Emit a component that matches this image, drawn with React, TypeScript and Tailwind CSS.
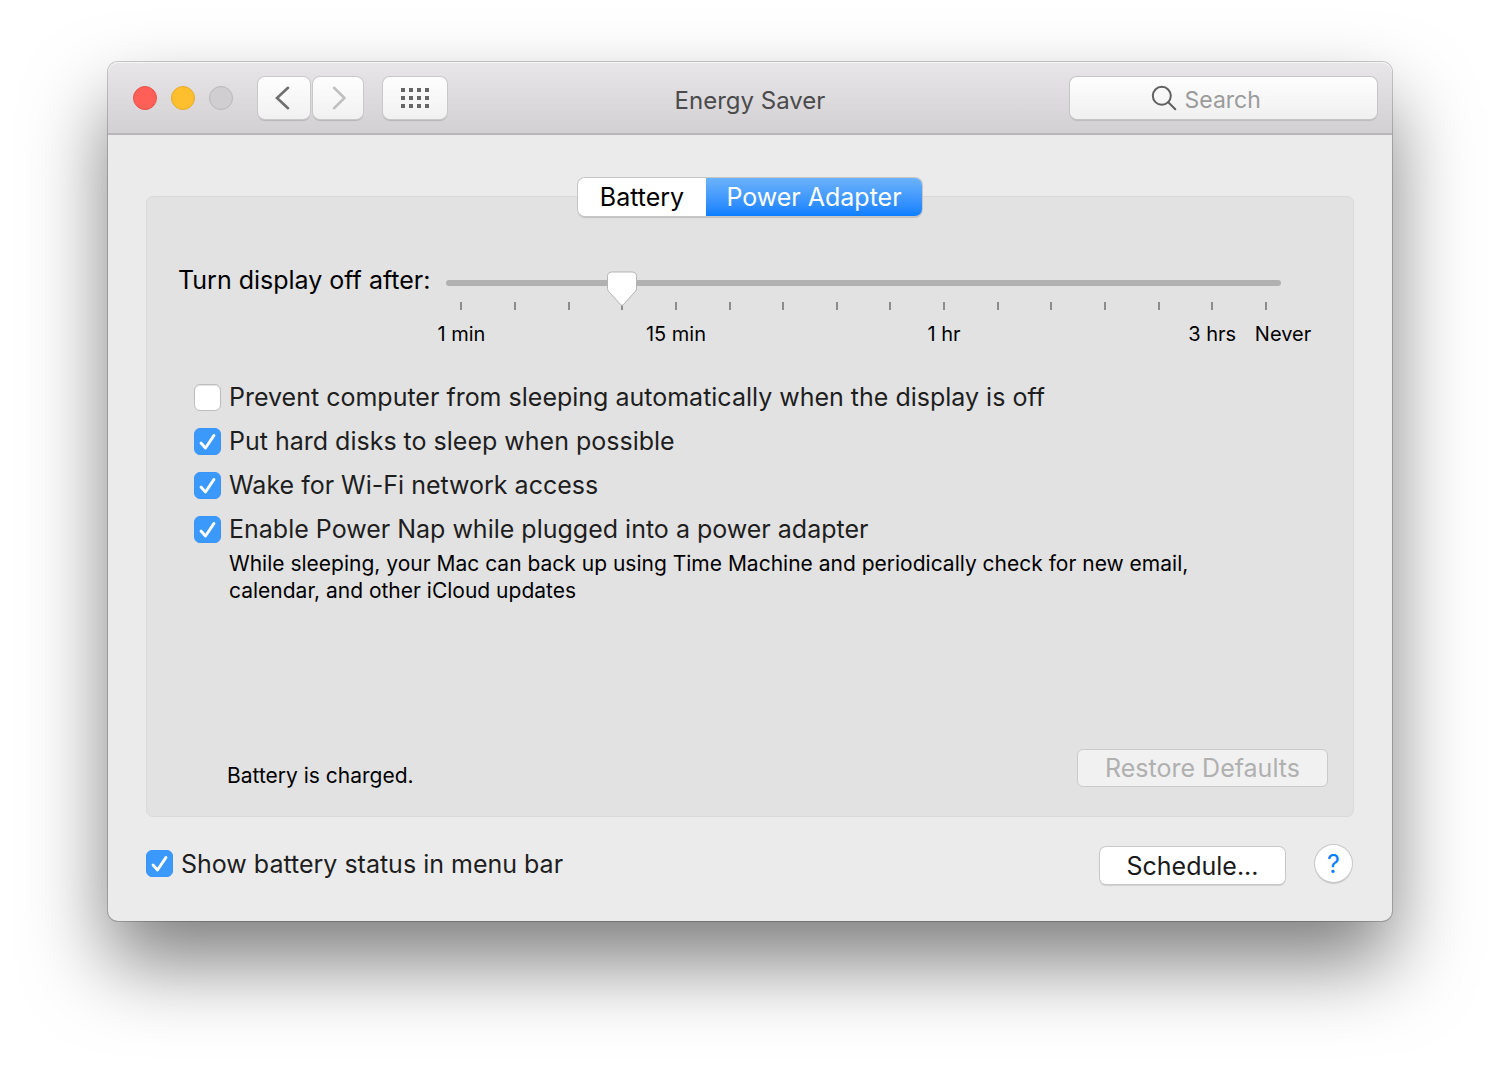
import { useState } from "react";

const LABELS: Record<number, string> = { 0: "1 min", 4: "15 min", 9: "1 hr", 14: "3 hrs", 15: "Never" };
const TICKS = Array.from({ length: 16 }, (_, i) => i);

function Check({ label, checked = false }: { label: string; checked?: boolean }) {
  return (
    <label className="flex w-fit items-center gap-2 text-[25px] leading-8 text-[#1e1e1e]">
      <span className="grid size-[27px] shrink-0">
        <input
          type="checkbox"
          defaultChecked={checked}
          className="peer col-start-1 row-start-1 size-[27px] appearance-none rounded-[6px] border border-[#bdbdbd] bg-white shadow-[inset_0_1px_1px_rgba(0,0,0,0.12)] checked:border-[#3b95f8] checked:bg-[#3b99fc] checked:shadow-none"
        />
        <svg
          viewBox="0 0 27 27"
          className="pointer-events-none col-start-1 row-start-1 size-[27px] opacity-0 peer-checked:opacity-100"
          fill="none"
          stroke="white"
          strokeWidth="2.8"
          strokeLinecap="round"
          strokeLinejoin="round"
          aria-hidden="true"
        >
          <path d="M7 15 11.500 20 20 7.400" />
        </svg>
      </span>
      {label}
    </label>
  );
}

function DisplaySlider() {
  const [value, setValue] = useState(3);
  return (
    <div className="flex items-start">
      <label htmlFor="display-off" className="shrink-0 text-[25px] leading-8 text-black">
        Turn display off after:
      </label>
      <div className="mt-[7px] mr-[47px] ml-4 min-w-0 flex-1">
        <div className="relative flex h-[35px] items-start">
          <input
            id="display-off"
            type="range"
            min={0}
            max={15}
            value={value}
            onChange={(e) => setValue(Number(e.target.value))}
            className="mt-[9px] h-1.5 w-full appearance-none rounded-full bg-[#b1b1b1] [&::-webkit-slider-thumb]:h-8 [&::-webkit-slider-thumb]:w-[30px] [&::-webkit-slider-thumb]:appearance-none [&::-webkit-slider-thumb]:opacity-0"
          />
          <div className="pointer-events-none absolute inset-x-[15px] top-0 h-[35px]">
            <svg
              viewBox="0 0 32 36"
              className="absolute h-9 w-8 -translate-x-1/2"
              style={{ left: `${(value / 15) * 100}%` }}
              aria-hidden="true"
            >
              <path
                d="M6 1H26Q30.500 1 30.500 5.500V17.500Q30.500 19 29.500 20.200L17.200 33.800Q16 35 14.800 33.800L2.500 20.200Q1.500 19 1.500 17.500V5.500Q1.500 1 6 1Z"
                fill="white"
                stroke="#b4b4b4"
                strokeWidth="1"
              />
            </svg>
          </div>
        </div>
        <div className="-mt-1 flex justify-between px-3.5">
          {TICKS.map((i) => (
            <div key={i} className={`flex w-0.5 flex-col gap-2.5 ${i === 15 ? "items-start" : "items-center"}`}>
              <span className="h-2 w-0.5 shrink-0 bg-[#8c8c8c]" />
              <span className={`text-[20px] leading-7 whitespace-nowrap text-black ${i === 15 ? "-ml-2.5" : ""}`}>
                {LABELS[i] ?? ""}
              </span>
            </div>
          ))}
        </div>
      </div>
    </div>
  );
}

const toolButton =
  "flex h-[42px] items-center justify-center rounded-[7px] bg-linear-to-b from-[#fefefe] to-[#f1f1f1] shadow-[0_0_0_1px_#c9c8c9,0_2px_1px_rgba(0,0,0,0.15)]";

export default function App() {
  return (
    <main className="min-h-screen bg-white px-[108px] pt-[62px] pb-[154px] font-['Inter',sans-serif]">
      <section className="rounded-[10px] bg-[#ebebeb] shadow-[0_0_0_1px_rgba(0,0,0,0.2),0_42px_80px_rgba(0,0,0,0.5)]">
        <header className="grid h-[73px] grid-cols-[1fr_auto_1fr] items-center rounded-t-[10px] border-b-2 border-[#b8b6b8] bg-linear-to-b from-[#e8e6e8] to-[#d2d0d2] px-[15px] shadow-[inset_0_1px_0_#f6f5f6]">
          <div className="flex items-center pl-2.5">
            <div className="mr-[25px] flex gap-[14px]">
              <button aria-label="Close" className="size-6 rounded-full border border-[#e9534b] bg-[#ff5f57]" />
              <button aria-label="Minimize" className="size-6 rounded-full border border-[#e6ac2d] bg-[#fdbf2d]" />
              <button aria-label="Zoom" disabled className="size-6 rounded-full border border-[#b9b7b9] bg-[#d0ced0]" />
            </div>
            <button aria-label="Back" className={`${toolButton} w-[52px]`}>
              <svg viewBox="0 0 18 24" className="h-6 w-[18px]" fill="none" stroke="#6f6f6f" strokeWidth="2.6" strokeLinecap="round" aria-hidden="true">
                <path d="M13 1.800 2 12 13 22.200" />
              </svg>
            </button>
            <button aria-label="Forward" disabled className={`${toolButton} ml-[3px] w-[50px]`}>
              <svg viewBox="0 0 16 24" className="h-6 w-4" fill="none" stroke="#c0c0c0" strokeWidth="2.6" strokeLinecap="round" aria-hidden="true">
                <path d="M4 1.800 14.500 12 4 22.200" />
              </svg>
            </button>
            <button aria-label="Show all preferences" className={`${toolButton} ml-5 w-16`}>
              <svg viewBox="0 0 28 20" className="h-5 w-7" fill="#666" aria-hidden="true">
                {[0, 8, 16, 24].map((x) => [0, 8, 16].map((y) => <rect key={`${x}-${y}`} x={x} y={y} width="4" height="4" />))}
              </svg>
            </button>
          </div>
          <h1 className="pt-1.5 text-[24px] leading-8 font-normal text-[#4b4b4b]">Energy Saver</h1>
          <label className="flex h-[42px] w-[307px] items-center justify-center gap-2 justify-self-end rounded-[7px] bg-linear-to-b from-[#fefefe] to-[#f0f0f0] shadow-[0_0_0_1px_#c6c5c6,0_2px_1px_rgba(0,0,0,0.12)]">
            <svg viewBox="0 0 26 26" className="size-[26px]" fill="none" stroke="#606060" strokeWidth="2" strokeLinecap="round" aria-hidden="true">
              <circle cx="10.800" cy="10.800" r="9" />
              <path d="m17.300 17.300 7 7" />
            </svg>
            <input
              type="search"
              aria-label="Search"
              placeholder="Search"
              className="w-28 bg-transparent pt-1 text-[23px] leading-8 outline-none placeholder:text-[#9b9b9b] [&::-webkit-search-cancel-button]:hidden"
            />
          </label>
        </header>

        <div className="px-[38px] pt-[43px] pb-[37px]">
          <div role="tablist" className="relative z-10 mx-auto -mb-5 flex w-fit rounded-[7px] text-[25px] leading-[38px] shadow-[0_0_0_1px_#c6c6c6,0_2px_1px_rgba(0,0,0,0.15)]">
            <button role="tab" aria-selected="false" className="w-32 rounded-l-[7px] bg-white text-black">
              Battery
            </button>
            <button role="tab" aria-selected="true" className="w-[216px] rounded-r-[7px] bg-linear-to-b from-[#6bb3fa] to-[#087eff] text-white">
              Power Adapter
            </button>
          </div>

          <div role="tabpanel" className="rounded-[7px] border border-[#d9d9d9] bg-[#e2e2e2] pt-[67px] pr-[25px] pb-[29px] pl-[31px]">
            <DisplaySlider />
            <div className="mt-[33px] ml-4 flex flex-col gap-3">
              <Check label="Prevent computer from sleeping automatically when the display is off" />
              <Check label="Put hard disks to sleep when possible" checked />
              <Check label="Wake for Wi-Fi network access" checked />
              <Check label="Enable Power Nap while plugged into a power adapter" checked />
            </div>
            <p className="mt-[5px] mr-24 ml-[51px] text-[21px] leading-[27px] text-black">
              While sleeping, your Mac can back up using Time Machine and periodically check for new email, calendar, and other iCloud updates
            </p>
            <div className="mt-[145px] flex items-center justify-between pl-[49px]">
              <p className="pt-4 text-[21px] leading-[22px] text-black">Battery is charged.</p>
              <button disabled className="h-[38px] w-[251px] rounded-[6px] border border-[#cacaca] bg-[#f1f1f1] text-[25px] leading-8 text-[#b0b0b0]">
                Restore Defaults
              </button>
            </div>
          </div>

          <footer className="mt-[26px] flex items-center pr-0.5">
            <Check label="Show battery status in menu bar" checked />
            <button className="mt-1 ml-auto h-[37px] w-[185px] rounded-[6px] bg-white text-[25px] leading-8 text-[#1a1a1a] shadow-[0_0_0_1px_#c8c8c8,0_2px_1px_rgba(0,0,0,0.12)]">
              Schedule...
            </button>
            <button aria-label="Help" className="ml-[30px] size-[37px] rounded-full bg-white text-[25px] leading-8 text-[#087eff] shadow-[0_0_0_1px_#c8c8c8,0_2px_1px_rgba(0,0,0,0.15)]">
              ?
            </button>
          </footer>
        </div>
      </section>
    </main>
  );
}
